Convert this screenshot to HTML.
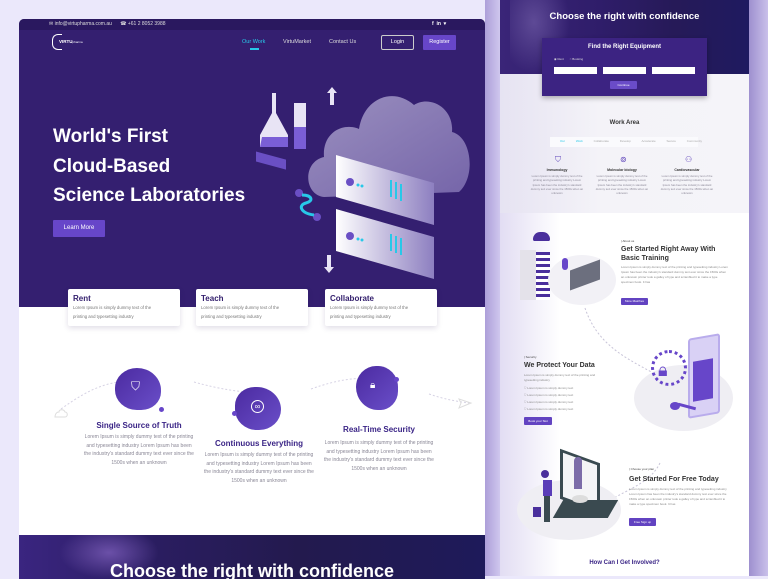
<!DOCTYPE html>
<html><head><meta charset="utf-8"><style>
*{margin:0;padding:0;box-sizing:border-box}
body{width:768px;height:576px;overflow:hidden;position:relative;background:#ebe8fb;font-family:"Liberation Sans",sans-serif}
.a{position:absolute}
.lorem{color:#8a8796;font-size:5px;line-height:8.5px;text-align:center}
.card{background:#fff;border-radius:2px;box-shadow:0 2px 6px rgba(40,20,90,.15)}
.card b{display:block;color:#34206e;font-size:8px;margin:5px 0 1px 5px}
.card p{font-size:4.3px;color:#777;line-height:8.5px;margin-left:5px}
.ft{color:#3a2486;font-weight:bold;font-size:8px;text-align:center}
.btn{background:#6243c1;color:#fff;font-size:3px;text-align:center;border-radius:1px}
.rt{font-size:3px;color:#888;line-height:5px}
.rh{font-size:7px;font-weight:bold;color:#333;line-height:9px}
</style></head><body>
<div class="a" style="left:749px;top:0;width:19px;height:576px;background:linear-gradient(90deg,#9e90cf,#c9c0ea)"></div>
<div class="a" style="left:485px;top:0;width:18px;height:576px;background:linear-gradient(90deg,#ad9fd9,#d6cff2)"></div>

<!-- LEFT CARD -->
<div class="a" style="left:19px;top:19px;width:466px;height:560px;background:#fff;border-radius:5px 5px 0 0;overflow:hidden">
 <div class="a" style="left:0;top:0;width:466px;height:288px;background:#341f70"></div>
 <div class="a" style="left:0;top:0;width:466px;height:11px;background:#2a185f"></div>
 <div class="a" style="left:30px;top:2px;font-size:5px;color:#ddd">✉ info@virtupharma.com.au &nbsp;&nbsp;&nbsp;&nbsp; ☎ +61 2 8052 3988</div>
 <div class="a" style="left:413px;top:2px;font-size:5px;color:#fff;font-weight:bold">f &nbsp;in &nbsp;▾</div>
 <div class="a" style="left:33px;top:15px;width:10px;height:16px;border:1.5px solid #fff;border-right:none;border-radius:6px 0 0 6px"></div>
 <div class="a" style="left:40px;top:20px;font-size:4.5px;color:#fff;font-weight:bold">VIRTU<span style="font-weight:normal;font-size:3px">pharma</span></div>
 <div class="a" style="left:223px;top:20px;font-size:5.5px;color:#28c8e8">Our Work</div>
 <div class="a" style="left:231px;top:29px;width:9px;height:1.5px;background:#28c8e8"></div>
 <div class="a" style="left:264px;top:20px;font-size:5.5px;color:#ddd">VirtuMarket</div>
 <div class="a" style="left:310px;top:20px;font-size:5.5px;color:#ddd">Contact Us</div>
 <div class="a" style="left:362px;top:16px;width:33px;height:15px;border:1px solid #ccc;border-radius:2px;color:#fff;font-size:5.5px;text-align:center;line-height:13px">Login</div>
 <div class="a" style="left:404px;top:16px;width:33px;height:15px;background:#6746c9;border-radius:1px;color:#fff;font-size:5.5px;text-align:center;line-height:15px">Register</div>
 <div class="a" style="left:34px;top:103px;font-size:19px;font-weight:bold;color:#fff;line-height:29.5px">World's First<br>Cloud-Based<br>Science Laboratories</div>
 <div class="a" style="left:34px;top:201px;width:52px;height:17px;background:#6746c9;border-radius:1px;color:#fff;font-size:6px;text-align:center;line-height:17px">Learn More</div>
 <svg class="a" style="left:235px;top:48px" width="230" height="225" viewBox="0 0 230 225">
  <defs><linearGradient id="cg" x1="0" y1="0" x2="1" y2="1"><stop offset="0" stop-color="#a69cc8"/><stop offset="1" stop-color="#7c6caf"/></linearGradient>
  <linearGradient id="sg" x1="0" y1="0" x2="1" y2="0"><stop offset="0" stop-color="#fff"/><stop offset="1" stop-color="#8d7fc0"/></linearGradient></defs>
  <path d="M70 130 C50 128 48 95 70 90 C68 65 90 55 105 62 C110 30 140 20 160 38 C175 28 200 40 198 65 C218 70 222 110 205 125 Z" fill="url(#cg)" opacity=".9"/>
  <polygon points="82,88 180,116 180,158 82,130" fill="url(#sg)"/>
  <polygon points="82,142 180,170 180,212 82,184" fill="url(#sg)"/>
  <circle cx="96" cy="115" r="4" fill="#6a4fc4"/><circle cx="104" cy="118" r="1.5" fill="#28c8e8"/><circle cx="108" cy="119" r="1.5" fill="#28c8e8"/>
  <circle cx="96" cy="169" r="4" fill="#6a4fc4"/><circle cx="104" cy="172" r="1.5" fill="#28c8e8"/><circle cx="108" cy="173" r="1.5" fill="#28c8e8"/>
  <path d="M137 113v17M142 115v17M147 117v17M137 167v17M142 169v17M147 171v17" stroke="#28c8e8" stroke-width="2"/>
  <path d="M28 42 l5-6 5 6 h-3 v12 h-4 v-12z" fill="#e8e4f5" transform="translate(45 -16)"/>
  <path d="M73 188 v12 h-3 l5 6 5-6 h-3 v-12z" fill="#e8e4f5"/>
  <path d="M20 26 h10 v20 l12 22 v12 h-28 v-12 l12-22 v-20z" fill="#e8e4f5" transform="translate(-8 0)"/>
  <path d="M8 70 l26 0 v10 h-28z" fill="#7a5ed6"/>
  <path d="M40 36 h12 v46 h-12z" fill="#e8e4f5"/><path d="M40 60 h12 v22 h-12z" fill="#7a5ed6"/>
  <rect x="2" y="84" width="30" height="10" fill="#6a4fc4" transform="skewY(15)"/>
  <circle cx="45" cy="126" r="4" fill="#6a4fc4"/><circle cx="63" cy="150" r="4" fill="#6a4fc4"/>
  <path d="M48 128 c10 0 12 6 4 8 c-8 2 -6 10 8 12" stroke="#28c8e8" stroke-width="3" fill="none"/>
 </svg>
 <div class="a card" style="left:49px;top:270px;width:112px;height:37px"><b>Rent</b><p>Lorem Ipsum is simply dummy text of the<br>printing and typesetting industry</p></div>
 <div class="a card" style="left:177px;top:270px;width:112px;height:37px"><b>Teach</b><p>Lorem Ipsum is simply dummy text of the<br>printing and typesetting industry</p></div>
 <div class="a card" style="left:306px;top:270px;width:112px;height:37px"><b>Collaborate</b><p>Lorem Ipsum is simply dummy text of the<br>printing and typesetting industry</p></div>
 <svg class="a" style="left:30px;top:340px" width="430" height="90" viewBox="0 0 430 90">
  <path d="M12 50 C40 30 60 20 95 22 M145 23 C170 30 190 33 210 34 M262 30 C290 20 310 18 325 20 M380 35 C395 40 405 42 420 44" stroke="#d6d2e4" stroke-dasharray="2 2" fill="none"/>
  <path d="M6 58 h10 c3 0 3-5 0-5 c-1-3-6-3-6 0 c-4 0-4 5-4 5z" stroke="#ddd" fill="none"/>
  <path d="M410 40 l12 4 -12 5 2-5z" stroke="#ddd" fill="none"/>
 </svg>
 <div class="a" style="left:96px;top:349px;width:46px;height:42px;border-radius:50% 55% 45% 50%;background:linear-gradient(135deg,#4b2aa0,#6a4fc9)"></div>
 <div class="a" style="left:140px;top:388px;width:5px;height:5px;border-radius:50%;background:#6746c9"></div>
 <div class="a" style="left:112px;top:360px;color:#fff;font-size:12px">⛉</div>
 <div class="a" style="left:216px;top:368px;width:46px;height:43px;border-radius:45% 55% 50% 50%;background:linear-gradient(135deg,#4b2aa0,#6a4fc9)"></div>
 <div class="a" style="left:213px;top:392px;width:5px;height:5px;border-radius:50%;background:#6746c9"></div>
 <div class="a" style="left:232px;top:381px;width:13px;height:13px;border:1.2px solid #fff;border-radius:50%;color:#fff;font-size:8px;text-align:center;line-height:11px">∞</div>
 <div class="a" style="left:337px;top:347px;width:42px;height:44px;border-radius:50% 50% 45% 55%;background:linear-gradient(135deg,#4b2aa0,#6a4fc9)"></div>
 <div class="a" style="left:375px;top:358px;width:5px;height:5px;border-radius:50%;background:#6746c9"></div>
 <div class="a" style="left:351px;top:361px;color:#fff;font-size:10px">🔒︎</div>
 <div class="a ft" style="left:60px;top:402px;width:120px">Single Source of Truth</div>
 <div class="a lorem" style="left:64px;top:414px;width:112px">Lorem Ipsum is simply dummy text of the printing and typesetting industry Lorem Ipsum has been the industry's standard dummy text ever since the 1500s when an unknown</div>
 <div class="a ft" style="left:180px;top:420px;width:120px">Continuous Everything</div>
 <div class="a lorem" style="left:184px;top:432px;width:112px">Lorem Ipsum is simply dummy text of the printing and typesetting industry Lorem Ipsum has been the industry's standard dummy text ever since the 1500s when an unknown</div>
 <div class="a ft" style="left:300px;top:406px;width:120px">Real-Time Security</div>
 <div class="a lorem" style="left:304px;top:420px;width:112px">Lorem Ipsum is simply dummy text of the printing and typesetting industry Lorem Ipsum has been the industry's standard dummy text ever since the 1500s when an unknown</div>
 <div class="a" style="left:0;top:516px;width:466px;height:44px;background:linear-gradient(90deg,#3a2580,#2a1d60 30%,#231a4e 60%,#1e1a5a)"></div>
 <div class="a" style="left:40px;top:516px;width:100px;height:44px;background:radial-gradient(ellipse at 50% 40%,#6b50a8,transparent 70%)"></div>
 <div class="a" style="left:0;top:542px;width:466px;text-align:center;color:#fff;font-size:18px;font-weight:bold">Choose the right with confidence</div>
</div>

<!-- RIGHT CARD -->
<div class="a" style="left:500px;top:0;width:249px;height:576px;background:#fff;overflow:hidden">
 <div class="a" style="left:0;top:0;width:249px;height:74px;background:linear-gradient(90deg,#3a2578,#2f1d6a 40%,#261a58 70%,#1f1a60)"></div>
 <div class="a" style="left:10px;top:0;width:60px;height:74px;background:radial-gradient(ellipse at 40% 30%,#5e4a96,transparent 70%)"></div>
 <div class="a" style="left:0;top:11px;width:249px;text-align:center;color:#fff;font-size:9.5px;font-weight:bold">Choose the right with confidence</div>
 <div class="a" style="left:0;top:74px;width:249px;height:139px;background:linear-gradient(90deg,#e6e3f2,#f4f3f8 40%,#f5f4f9)"></div>
 <div class="a" style="left:42px;top:38px;width:165px;height:58px;background:#3c2382;box-shadow:0 2px 5px rgba(0,0,0,.3)"></div>
 <div class="a" style="left:42px;top:44px;width:165px;text-align:center;color:#fff;font-size:6px;font-weight:bold">Find the Right Equipment</div>
 <div class="a" style="left:54px;top:57px;font-size:3px;color:#ddd">◉ Rent &nbsp;&nbsp;&nbsp;&nbsp;&nbsp; ○ Booking</div>
 <div class="a" style="left:54px;top:67px;width:43px;height:7px;background:#fff"></div>
 <div class="a" style="left:103px;top:67px;width:43px;height:7px;background:#fff"></div>
 <div class="a" style="left:152px;top:67px;width:43px;height:7px;background:#fff"></div>
 <div class="a btn" style="left:110px;top:81px;width:27px;height:8px;line-height:8px;background:#6a4cc8">Continue</div>
 <div class="a" style="left:0;top:120px;width:249px;text-align:center;font-size:6px;font-weight:bold;color:#333">Work Area</div>
 <div class="a" style="left:50px;top:137px;width:148px;height:10px;background:#fafafd"></div>
 <div class="a" style="left:60px;top:139px;font-size:3px;color:#aaa;word-spacing:10px"><span style="color:#28c8e8">Our&nbsp;Work</span> Collaborate Develop Accelerate Secure Community</div>
 <div class="a" style="left:0;top:155px;width:249px;height:12px;font-size:8px;color:#5a3fb8">
  <span class="a" style="left:55px">⛉</span><span class="a" style="left:120px">⊚</span><span class="a" style="left:185px">⚇</span></div>
 <div class="a" style="left:27px;top:168px;width:60px;font-size:3.5px;font-weight:bold;text-align:center;color:#333">Immunology</div>
 <div class="a" style="left:92px;top:168px;width:60px;font-size:3.5px;font-weight:bold;text-align:center;color:#333">Molecular biology</div>
 <div class="a" style="left:157px;top:168px;width:60px;font-size:3.5px;font-weight:bold;text-align:center;color:#333">Cardiovascular</div>
 <div class="a lorem" style="left:29px;top:174px;width:56px;font-size:2.8px;line-height:4.3px">Lorem Ipsum is simply dummy text of the printing and typesetting industry Lorem Ipsum has been the industry's standard dummy text ever since the 1500s when an unknown</div>
 <div class="a lorem" style="left:94px;top:174px;width:56px;font-size:2.8px;line-height:4.3px">Lorem Ipsum is simply dummy text of the printing and typesetting industry Lorem Ipsum has been the industry's standard dummy text ever since the 1500s when an unknown</div>
 <div class="a lorem" style="left:159px;top:174px;width:56px;font-size:2.8px;line-height:4.3px">Lorem Ipsum is simply dummy text of the printing and typesetting industry Lorem Ipsum has been the industry's standard dummy text ever since the 1500s when an unknown</div>
 <div class="a" style="left:0;top:213px;width:60px;height:363px;background:linear-gradient(90deg,#e2ddf3,#fff)"></div>
 <!-- illus 1 -->
 <div class="a" style="left:20px;top:250px;width:16px;height:50px;background:#e4e2ea"></div>
 <div class="a" style="left:36px;top:252px;width:14px;height:48px;background:repeating-linear-gradient(#4a2f9c 0 3px,#fff 3px 6px)"></div>
 <div class="a" style="left:33px;top:232px;width:17px;height:9px;background:#4a2f9c;border-radius:8px 8px 2px 2px"></div>
 <div class="a" style="left:48px;top:255px;width:68px;height:50px;border-radius:50%;background:#f2f1f6"></div>
 <div class="a" style="left:70px;top:265px;width:30px;height:20px;background:#6c6f7e;transform:skewY(-20deg)"></div>
 <div class="a" style="left:62px;top:258px;width:6px;height:12px;background:#6746c9;border-radius:3px"></div>
 <div class="a" style="left:121px;top:239px;font-size:3px;color:#444">| About us</div>
 <div class="a rh" style="left:121px;top:245px">Get Started Right Away With<br>Basic Training</div>
 <div class="a rt" style="left:121px;top:265px;width:108px">Lorem Ipsum is simply dummy text of the printing and typesetting industry Lorem Ipsum has been the industry's standard dummy text ever since the 1500s when an unknown printer took a galley of type and scrambled it to make a type specimen book. It has</div>
 <div class="a btn" style="left:121px;top:298px;width:27px;height:7px;line-height:7px">More Matches</div>
 <svg class="a" style="left:0;top:213px" width="249" height="363"><path d="M85 95 C100 140 140 150 170 170 M160 250 C150 270 130 275 105 290" stroke="#c8c4d8" stroke-dasharray="2 2" fill="none"/></svg>
 <!-- illus 2 -->
 <div class="a" style="left:134px;top:365px;width:99px;height:66px;border-radius:50%;background:#efeef3"></div>
 <div class="a" style="left:188px;top:336px;width:32px;height:80px;background:#d9d1f5;border:2px solid #b9acec;border-radius:3px;transform:skewY(-10deg)"></div>
 <div class="a" style="left:193px;top:360px;width:20px;height:40px;background:#6746c9;transform:skewY(-10deg)"></div>
 <div class="a" style="left:158px;top:360px;width:16px;height:22px;font-size:18px;color:#6746c9">🔒︎</div>
 <div class="a" style="left:151px;top:350px;width:36px;height:36px;border:3px dotted #6746c9;border-radius:50%"></div>
 <div class="a" style="left:170px;top:402px;width:10px;height:8px;border-radius:50%;background:#6746c9"></div>
 <div class="a" style="left:178px;top:405px;width:18px;height:3px;background:#6746c9;transform:rotate(15deg)"></div>
 <div class="a" style="left:24px;top:355px;font-size:3px;color:#444">| Security</div>
 <div class="a rh" style="left:24px;top:361px">We Protect Your Data</div>
 <div class="a rt" style="left:24px;top:373px;width:76px">Lorem Ipsum is simply dummy text of the printing and typesetting industry</div>
 <div class="a rt" style="left:24px;top:385px;line-height:7px;color:#888">⛉ Lorem Ipsum is simply dummy text<br>⛉ Lorem Ipsum is simply dummy text<br>⛉ Lorem Ipsum is simply dummy text<br>⛉ Lorem Ipsum is simply dummy text</div>
 <div class="a btn" style="left:24px;top:417px;width:28px;height:8px;line-height:8px">Book your Slot</div>
 <!-- illus 3 -->
 <div class="a" style="left:17px;top:480px;width:104px;height:60px;border-radius:50%;background:#efeef3"></div>
 <div class="a" style="left:60px;top:456px;width:40px;height:50px;border:3px solid #3a4a50;background:#f4f4f6;transform:skewY(20deg)"></div>
 <div class="a" style="left:58px;top:500px;width:55px;height:18px;background:#3a4a50;transform:skewX(-30deg)"></div>
 <div class="a" style="left:74px;top:457px;width:8px;height:32px;background:#7c6ca8;border-radius:4px 4px 0 0"></div>
 <div class="a" style="left:72px;top:495px;width:16px;height:8px;background:#ddd;border-radius:50%"></div>
 <div class="a" style="left:41px;top:470px;width:8px;height:8px;background:#4a2f9c;border-radius:50%"></div>
 <div class="a" style="left:43px;top:480px;width:9px;height:16px;background:#5a3db8"></div>
 <div class="a" style="left:44px;top:496px;width:6px;height:26px;background:#3a4a50"></div>
 <div class="a" style="left:33px;top:507px;width:8px;height:10px;background:#4a2f9c"></div>
 <div class="a" style="left:129px;top:467px;font-size:3px;color:#444">| Choose your plan</div>
 <div class="a rh" style="left:129px;top:475px">Get Started For Free Today</div>
 <div class="a rt" style="left:129px;top:487px;width:100px">Lorem Ipsum is simply dummy text of the printing and typesetting industry Lorem Ipsum has been the industry's standard dummy text ever since the 1500s when an unknown printer took a galley of type and scrambled it to make a type specimen book. It has</div>
 <div class="a btn" style="left:129px;top:518px;width:27px;height:8px;line-height:8px">Free Sign up</div>
 <div class="a" style="left:0;top:560px;width:249px;text-align:center;font-size:6px;font-weight:bold;color:#3a2486">How Can I Get Involved?</div>
</div>
</body></html>
